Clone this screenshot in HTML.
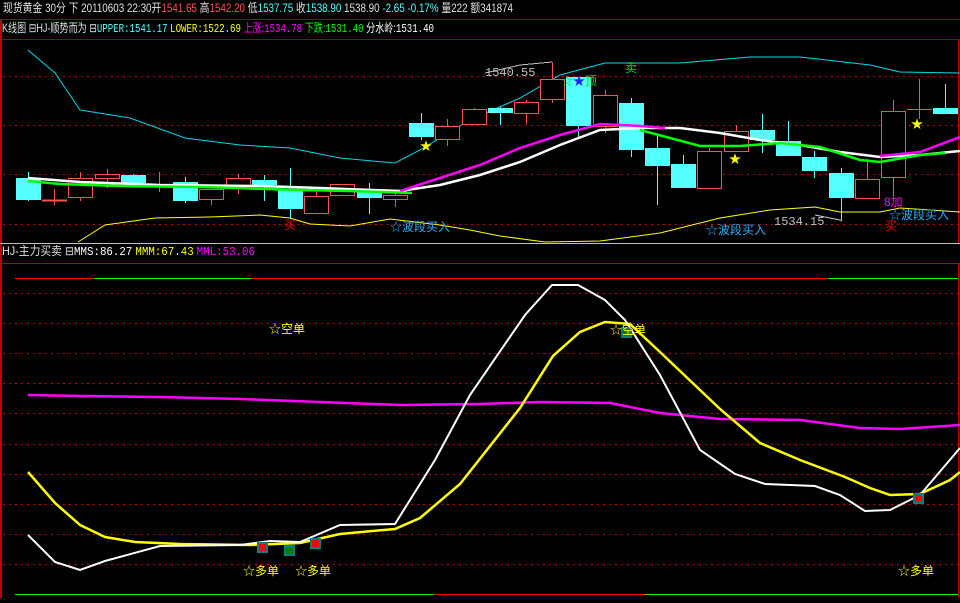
<!DOCTYPE html>
<html><head><meta charset="utf-8">
<style>
html,body{margin:0;padding:0;background:#000;}
body{width:960px;height:598px;overflow:hidden;}
svg text{font-family:"Liberation Sans","Noto Sans CJK SC",sans-serif;font-size:12px;}
.m{font-family:"Liberation Mono","Noto Sans CJK SC",monospace;}
</style></head><body>
<svg width="960" height="598" viewBox="0 0 960 598" xmlns="http://www.w3.org/2000/svg" shape-rendering="crispEdges">
<rect width="960" height="598" fill="#000"/>
<!-- header -->
<text x="3" y="12" fill="#e0e0e0" textLength="510" lengthAdjust="spacingAndGlyphs">现货黄金 30分 下 20110603 22:30开<tspan fill="#ff5050">1541.65</tspan> 高<tspan fill="#ff5050">1542.20</tspan> 低<tspan fill="#54ffff">1537.75</tspan> 收<tspan fill="#54ffff">1538.90</tspan> 1538.90  <tspan fill="#54ffff">-2.65 -0.17%</tspan> 量222 额341874</text>
<line x1="0" y1="19.5" x2="960" y2="19.5" stroke="#a00000"/>
<line x1="0" y1="39.5" x2="960" y2="39.5" stroke="#a00000"/>
<text x="2" y="32" fill="#e0e0e0" textLength="432" lengthAdjust="spacingAndGlyphs">K线图 <tspan>⊟HJ-顺势而为 ⊟</tspan><tspan class="m" fill="#54ffff">UPPER:1541.17</tspan> <tspan class="m" fill="#ffff00">LOWER:1522.69</tspan> <tspan fill="#ff00ff">上涨:<tspan class="m">1534.78</tspan></tspan> <tspan fill="#00ff00">下跌:<tspan class="m">1531.40</tspan></tspan> <tspan fill="#fff">分水岭:<tspan class="m">1531.40</tspan></tspan></text>
<!-- borders -->
<rect x="0" y="20" width="2" height="578" fill="#c00000"/>
<line x1="958.5" y1="40" x2="958.5" y2="243" stroke="#c00000"/>
<line x1="958.5" y1="263" x2="958.5" y2="598" stroke="#c00000"/>
<!-- upper dotted -->
<g stroke="#c00000" stroke-dasharray="2,4">
<line x1="3" y1="76.5" x2="958" y2="76.5"/><line x1="3" y1="125.5" x2="958" y2="125.5"/>
<line x1="3" y1="174.5" x2="958" y2="174.5"/><line x1="3" y1="224.5" x2="958" y2="224.5"/>
</g>
<line x1="0" y1="243.5" x2="960" y2="243.5" stroke="#c0c0c0"/>
<!-- bands -->
<g fill="none" shape-rendering="auto">
<polyline stroke="#00d8e8" stroke-width="1" points="28,50 55,73 80,110 130,118 185,138 240,145 290,148 340,158 395,163 420,150 470,120 520,98 560,75 605,63 680,63 750,57 800,57 870,65 900,72 960,73"/>
<polyline stroke="#ffff00" stroke-width="1" points="78,242 105,225 155,218 210,217 260,215 290,218 310,224 350,226 390,219 440,225 470,230 500,236 545,242 600,241 660,233 720,218 770,210 815,207 840,212 880,212 900,208 960,212"/>
</g>
<!-- candles -->
<g fill="none" stroke="#ff5050">
<line x1="54.5" y1="189" x2="54.5" y2="205"/><line x1="42" y1="200.5" x2="67" y2="200.5" stroke-width="2"/>
<line x1="80.5" y1="172" x2="80.5" y2="201"/><rect x="68.5" y="178.5" width="24" height="19" fill="#000"/>
<line x1="107.5" y1="169" x2="107.5" y2="188"/><rect x="95.5" y="174.5" width="24" height="4" fill="#000"/>
<line x1="159.5" y1="172" x2="159.5" y2="192"/><line x1="147" y1="184.5" x2="172" y2="184.5"/>
<line x1="211.5" y1="189" x2="211.5" y2="205"/><rect x="199.5" y="189.5" width="24" height="10" fill="#000"/>
<line x1="238.5" y1="174" x2="238.5" y2="194"/><rect x="226.5" y="178.5" width="24" height="8" fill="#000"/>
<line x1="316.5" y1="190" x2="316.5" y2="214"/><rect x="304.5" y="196.5" width="24" height="17" fill="#000"/>
<line x1="342.5" y1="184" x2="342.5" y2="195"/><rect x="330.5" y="184.5" width="24" height="11" fill="#000"/>
<line x1="395.5" y1="190" x2="395.5" y2="207"/><rect x="383.5" y="195.5" width="24" height="4" fill="#000"/>
<line x1="447.5" y1="119" x2="447.5" y2="146"/><rect x="435.5" y="126.5" width="24" height="13" fill="#000"/>
<line x1="474.5" y1="108" x2="474.5" y2="124"/><rect x="462.5" y="109.5" width="24" height="15" fill="#000"/>
<line x1="526.5" y1="100" x2="526.5" y2="124"/><rect x="514.5" y="102.5" width="24" height="11" fill="#000"/>
<line x1="552.5" y1="62" x2="552.5" y2="103"/><rect x="540.5" y="79.5" width="24" height="20" fill="#000"/>
<line x1="605.5" y1="90" x2="605.5" y2="133"/><rect x="593.5" y="95.5" width="24" height="31" fill="#000"/>
<line x1="709.5" y1="148" x2="709.5" y2="188"/><rect x="697.5" y="151.5" width="24" height="37" fill="#000"/>
<line x1="736.5" y1="125" x2="736.5" y2="151"/><rect x="724.5" y="131.5" width="24" height="20" fill="#000"/>
<line x1="867.5" y1="159" x2="867.5" y2="198"/><rect x="855.5" y="179.5" width="24" height="19" fill="#000"/>
<line x1="893.5" y1="100" x2="893.5" y2="196"/><rect x="881.5" y="111.5" width="24" height="66" fill="#000"/>
<line x1="919.5" y1="79" x2="919.5" y2="119"/><line x1="907" y1="109.5" x2="932" y2="109.5"/>
<polyline stroke="#c0c0c0" points="485,73 520,65 552,62"/>
<polyline stroke="#c0c0c0" points="815,215 840,220 842,221"/>
</g>
<g fill="#54ffff" stroke="#54ffff">
<line x1="28.5" y1="172" x2="28.5" y2="201"/><rect x="16" y="178" width="25" height="22" stroke="none"/>
<line x1="133.5" y1="174" x2="133.5" y2="187"/><rect x="121" y="175" width="25" height="8" stroke="none"/>
<line x1="185.5" y1="177" x2="185.5" y2="203"/><rect x="173" y="182" width="25" height="19" stroke="none"/>
<line x1="264.5" y1="175" x2="264.5" y2="201"/><rect x="252" y="180" width="25" height="5" stroke="none"/>
<line x1="290.5" y1="168" x2="290.5" y2="219"/><rect x="278" y="189" width="25" height="20" stroke="none"/>
<line x1="369.5" y1="183" x2="369.5" y2="214"/><rect x="357" y="191" width="25" height="7" stroke="none"/>
<line x1="421.5" y1="113" x2="421.5" y2="140"/><rect x="409" y="123" width="25" height="14" stroke="none"/>
<line x1="500.5" y1="107" x2="500.5" y2="125"/><rect x="488" y="108" width="25" height="5" stroke="none"/>
<line x1="578.5" y1="77" x2="578.5" y2="139"/><rect x="566" y="77" width="25" height="49" stroke="none"/>
<line x1="631.5" y1="98" x2="631.5" y2="157"/><rect x="619" y="103" width="25" height="47" stroke="none"/>
<line x1="657.5" y1="135" x2="657.5" y2="205"/><rect x="645" y="148" width="25" height="18" stroke="none"/>
<line x1="683.5" y1="155" x2="683.5" y2="188"/><rect x="671" y="164" width="25" height="24" stroke="none"/>
<line x1="762.5" y1="114" x2="762.5" y2="153"/><rect x="750" y="130" width="25" height="10" stroke="none"/>
<line x1="788.5" y1="121" x2="788.5" y2="156"/><rect x="776" y="141" width="25" height="15" stroke="none"/>
<line x1="814.5" y1="151" x2="814.5" y2="178"/><rect x="802" y="157" width="25" height="14" stroke="none"/>
<line x1="841.5" y1="168" x2="841.5" y2="221"/><rect x="829" y="173" width="25" height="25" stroke="none"/>
<line x1="945.5" y1="84" x2="945.5" y2="114"/><rect x="933" y="108" width="25" height="6" stroke="none"/>
</g>
<!-- MAs -->
<g fill="none" shape-rendering="auto" stroke-width="2.5">
<polyline stroke="#ffffff" points="28,178 80,182 160,185 260,186 320,188 400,191 440,185 480,175 520,162 560,145 600,130 640,128 680,128 720,133 760,140 800,145 840,152 880,157 920,155 960,151"/>
<polyline stroke="#ff00ff" points="400,191 440,178 480,165 520,148 560,135 600,124 640,126 665,128"/>
<polyline stroke="#ff00ff" points="880,156 920,152 960,137"/>
<polyline stroke="#00ff00" points="28,181 60,184 120,186 200,187 300,190 350,191 412,193"/>
<polyline stroke="#00ff00" points="640,130 700,146 740,146 780,143 820,147 860,160 880,162 920,155 945,153"/>
</g>
<!-- annotations -->
<text x="420" y="150" fill="#ffff00" font-size="15">★</text>
<text x="729" y="163" fill="#ffff00" font-size="15">★</text>
<text x="911" y="128" fill="#ffff00" font-size="15">★</text>
<text x="284" y="229" fill="#e00000">买</text>
<text x="885" y="230" fill="#e00000">买</text>
<text x="390" y="231" fill="#2ab0ff">☆波段买入</text>
<text x="706" y="234" fill="#2ab0ff">☆波段买入</text>
<text x="889" y="219" fill="#2ab0ff">☆波段买入</text>
<text x="884" y="206" fill="#ff00ff">8加</text>
<text x="561" y="85" fill="#00e000">☆<tspan fill="#2020ff">★</tspan>顶</text>
<text x="625" y="72" fill="#00e000">卖</text>
<text x="485" y="76" fill="#c0c0c0" class="m">1540.55</text>
<text x="774" y="225" fill="#c0c0c0" class="m">1534.15</text>
<!-- lower label -->
<text x="2" y="255" fill="#e0e0e0" textLength="253" lengthAdjust="spacingAndGlyphs">HJ-主力买卖 ⊟<tspan class="m" fill="#fff">MMS:86.27</tspan> <tspan class="m" fill="#ffff00">MMM:67.43</tspan> <tspan class="m" fill="#ff00ff">MML:53.06</tspan></text>
<line x1="0" y1="263.5" x2="960" y2="263.5" stroke="#c00000"/>
<!-- lower grid -->
<line x1="15" y1="278.5" x2="94" y2="278.5" stroke="#ff0000"/>
<line x1="94" y1="278.5" x2="251" y2="278.5" stroke="#00ff00"/>
<line x1="251" y1="278.5" x2="828" y2="278.5" stroke="#ff0000"/>
<line x1="828" y1="278.5" x2="958" y2="278.5" stroke="#00ff00"/>
<g stroke="#c00000" stroke-dasharray="2,4">
<line x1="3" y1="293.5" x2="958" y2="293.5"/><line x1="3" y1="323.5" x2="958" y2="323.5"/>
<line x1="3" y1="353.5" x2="958" y2="353.5"/><line x1="3" y1="383.5" x2="958" y2="383.5"/>
<line x1="3" y1="413.5" x2="958" y2="413.5"/><line x1="3" y1="444.5" x2="958" y2="444.5"/>
<line x1="3" y1="474.5" x2="958" y2="474.5"/><line x1="3" y1="504.5" x2="958" y2="504.5"/>
<line x1="3" y1="534.5" x2="958" y2="534.5"/><line x1="3" y1="564.5" x2="958" y2="564.5"/>
</g>
<line x1="15" y1="594.5" x2="434" y2="594.5" stroke="#00ff00"/>
<line x1="434" y1="594.5" x2="645" y2="594.5" stroke="#ff0000"/>
<line x1="645" y1="594.5" x2="958" y2="594.5" stroke="#00ff00"/>
<g fill="none" shape-rendering="auto">
<polyline stroke="#ff00ff" stroke-width="2.5" points="28,395 80,396 160,397 240,399 320,402 400,405 480,404 540,402 610,403 660,413 720,419 800,420 860,428 900,429 960,425"/>
<polyline stroke="#ffff00" stroke-width="2.5" points="28,472 55,503 80,525 105,537 135,542 180,544 250,545 300,543 340,534 395,529 420,518 460,484 520,408 553,356 580,332 605,322 630,324 660,352 720,409 760,443 800,460 845,477 870,488 890,495 920,494 950,480 960,472"/>
<polyline stroke="#ffffff" stroke-width="2" points="28,535 55,562 80,570 105,561 160,546 240,545 270,541 300,542 340,525 395,524 435,460 470,395 525,315 552,285 578,285 605,300 625,320 660,375 700,450 735,474 765,484 815,486 840,495 865,511 890,510 920,495 960,448"/>
</g>
<g>
<rect x="258" y="543" width="9" height="9" fill="#ff0000" stroke="#008080" stroke-width="2"/>
<rect x="285" y="546" width="9" height="9" fill="#008000" stroke="#008080" stroke-width="2"/>
<rect x="311" y="539" width="9" height="9" fill="#ff0000" stroke="#008080" stroke-width="2"/>
<rect x="622" y="328" width="9" height="9" fill="#008000" stroke="#008080" stroke-width="2"/>
<rect x="914" y="494" width="9" height="9" fill="#ff0000" stroke="#008080" stroke-width="2"/>
</g>
<text x="269" y="333" fill="#ffff00">☆空单</text>
<text x="610" y="334" fill="#ffff00">☆空单</text>
<text x="243" y="575" fill="#ffff00">☆多单</text>
<text x="295" y="575" fill="#ffff00">☆多单</text>
<text x="898" y="575" fill="#ffff00">☆多单</text>
</svg>
</body></html>
